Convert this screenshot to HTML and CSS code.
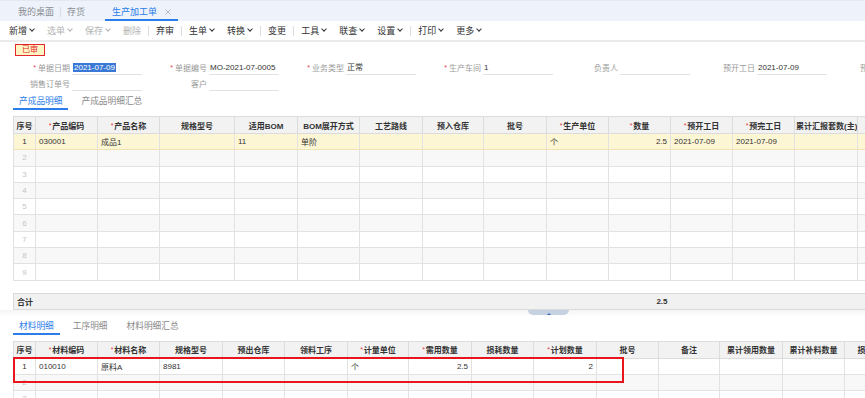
FILE: index.html
```html
<!DOCTYPE html>
<html lang="zh-CN">
<head>
    <meta charset="UTF-8">
    <meta name="viewport" content="width=device-width, initial-scale=1.0">
    <title>生产加工单</title>
    <link rel="stylesheet" href="styles.css">
</head>
<body>
    <div class="tabbar">
        <span class="tab">我的桌面</span>
        <span class="tab-sep"></span>
        <span class="tab">存货</span>
        <span class="tab active">生产加工单
            <svg class="tab-close" width="6" height="6" viewBox="0 0 6 6"><path d="M0.5 0.5L5.5 5.5M5.5 0.5L0.5 5.5" stroke="#b5b9c0" stroke-width="1"/></svg>
        </span>
    </div>

    <div class="toolbar">
        <span class="tool drop">新增</span>
        <span class="tool drop off">选单</span>
        <span class="tool drop off">保存</span>
        <span class="tool off">删除</span>
        <span class="tool-sep"></span>
        <span class="tool">弃审</span>
        <span class="tool-sep"></span>
        <span class="tool drop">生单</span>
        <span class="tool drop">转换</span>
        <span class="tool-sep"></span>
        <span class="tool">变更</span>
        <span class="tool-sep"></span>
        <span class="tool drop">工具</span>
        <span class="tool drop">联查</span>
        <span class="tool drop">设置</span>
        <span class="tool-sep"></span>
        <span class="tool drop">打印</span>
        <span class="tool drop">更多</span>
    </div>

    <div class="content">
        <div class="status">已审</div>

        <div class="form">
            <div class="form-row">
                <div class="field"><label class="req">单据日期</label><span class="val"><span class="sel">2021-07-09</span></span></div>
                <div class="field"><label class="req">单据编号</label><span class="val">MO-2021-07-0005</span></div>
                <div class="field"><label class="req">业务类型</label><span class="val">正常</span></div>
                <div class="field"><label class="req">生产车间</label><span class="val">1</span></div>
                <div class="field"><label>负责人</label><span class="val"></span></div>
                <div class="field"><label>预开工日</label><span class="val">2021-07-09</span></div>
                <div class="field"><label>预完工日</label><span class="val">2021-07-09</span></div>
            </div>
            <div class="form-row">
                <div class="field"><label>销售订单号</label><span class="val"></span></div>
                <div class="field"><label>客户</label><span class="val"></span></div>
            </div>
        </div>

        <div class="subtabs">
            <span class="subtab active">产成品明细</span>
            <span class="subtab">产成品明细汇总</span>
        </div>

        <div class="grid-wrap">
            <table class="grid">
                <colgroup>
                    <col style="width:22px"><col style="width:62px"><col style="width:62px"><col style="width:75px">
                    <col style="width:63px"><col style="width:62px"><col style="width:63px"><col style="width:61px">
                    <col style="width:63px"><col style="width:62px"><col style="width:62px"><col style="width:62px">
                    <col style="width:62px"><col style="width:63px"><col style="width:80px">
                </colgroup>
                <thead>
                    <tr>
                        <th>序号</th><th><i>*</i>产品编码</th><th><i>*</i>产品名称</th><th>规格型号</th>
                        <th>适用BOM</th><th>BOM展开方式</th><th>工艺路线</th><th>预入仓库</th>
                        <th>批号</th><th><i>*</i>生产单位</th><th><i>*</i>数量</th><th><i>*</i>预开工日</th>
                        <th><i>*</i>预完工日</th><th>累计汇报套数(主)</th><th></th>
                    </tr>
                </thead>
                <tbody>
                    <tr class="hl">
                        <td class="no">1</td><td>030001</td><td>成品1</td><td></td>
                        <td>11</td><td>单阶</td><td></td><td></td>
                        <td></td><td>个</td><td class="num">2.5</td><td>2021-07-09</td>
                        <td>2021-07-09</td><td></td><td></td>
                    </tr>
                    <tr><td class="no">2</td><td></td><td></td><td></td><td></td><td></td><td></td><td></td><td></td><td></td><td></td><td></td><td></td><td></td><td></td></tr>
                    <tr><td class="no">3</td><td></td><td></td><td></td><td></td><td></td><td></td><td></td><td></td><td></td><td></td><td></td><td></td><td></td><td></td></tr>
                    <tr><td class="no">4</td><td></td><td></td><td></td><td></td><td></td><td></td><td></td><td></td><td></td><td></td><td></td><td></td><td></td><td></td></tr>
                    <tr><td class="no">5</td><td></td><td></td><td></td><td></td><td></td><td></td><td></td><td></td><td></td><td></td><td></td><td></td><td></td><td></td></tr>
                    <tr><td class="no">6</td><td></td><td></td><td></td><td></td><td></td><td></td><td></td><td></td><td></td><td></td><td></td><td></td><td></td><td></td></tr>
                    <tr><td class="no">7</td><td></td><td></td><td></td><td></td><td></td><td></td><td></td><td></td><td></td><td></td><td></td><td></td><td></td><td></td></tr>
                    <tr><td class="no">8</td><td></td><td></td><td></td><td></td><td></td><td></td><td></td><td></td><td></td><td></td><td></td><td></td><td></td><td></td></tr>
                    <tr><td class="no">9</td><td></td><td></td><td></td><td></td><td></td><td></td><td></td><td></td><td></td><td></td><td></td><td></td><td></td><td></td></tr>
                </tbody>
            </table>
        </div>

        <div class="grid-wrap sum-wrap">
            <table class="sum">
                <colgroup>
                    <col style="width:22px"><col style="width:62px"><col style="width:62px"><col style="width:75px">
                    <col style="width:63px"><col style="width:62px"><col style="width:63px"><col style="width:61px">
                    <col style="width:63px"><col style="width:62px"><col style="width:62px"><col style="width:62px">
                    <col style="width:62px"><col style="width:63px"><col style="width:80px">
                </colgroup>
                <tr>
                    <td colspan="10">合计</td><td class="num">2.5</td><td colspan="4"></td>
                </tr>
            </table>
        </div>

        <div class="splitter"><span class="handle"></span></div>

        <div class="subtabs lower-tabs">
            <span class="subtab active">材料明细</span>
            <span class="subtab">工序明细</span>
            <span class="subtab">材料明细汇总</span>
        </div>

        <div class="grid-wrap lower">
            <table class="grid narrow">
                <colgroup>
                    <col style="width:22px"><col style="width:62px"><col style="width:62px"><col style="width:63px">
                    <col style="width:62px"><col style="width:63px"><col style="width:61px"><col style="width:63px">
                    <col style="width:62px"><col style="width:63px"><col style="width:62px"><col style="width:61px">
                    <col style="width:63px"><col style="width:62px"><col style="width:50px">
                </colgroup>
                <thead>
                    <tr>
                        <th>序号</th><th><i>*</i>材料编码</th><th><i>*</i>材料名称</th><th>规格型号</th>
                        <th>预出仓库</th><th>领料工序</th><th><i>*</i>计量单位</th><th><i>*</i>需用数量</th>
                        <th>损耗数量</th><th><i>*</i>计划数量</th><th>批号</th><th>备注</th>
                        <th>累计领用数量</th><th>累计补料数量</th><th>损耗率</th>
                    </tr>
                </thead>
                <tbody>
                    <tr class="plain">
                        <td class="no">1</td><td>010010</td><td>原料A</td><td>8981</td>
                        <td></td><td></td><td>个</td><td class="num">2.5</td>
                        <td></td><td class="num">2</td><td></td><td></td>
                        <td></td><td></td><td></td>
                    </tr>
                    <tr><td class="no">2</td><td></td><td></td><td></td><td></td><td></td><td></td><td></td><td></td><td></td><td></td><td></td><td></td><td></td><td></td></tr>
                    <tr class="plain"><td class="no">3</td><td></td><td></td><td></td><td></td><td></td><td></td><td></td><td></td><td></td><td></td><td></td><td></td><td></td><td></td></tr>
                </tbody>
            </table>
            <div class="mark"></div>
        </div>
    </div>
</body>
</html>
```

FILE: styles.css
```css
body {
    margin: 0;
    font-family: "Liberation Sans", "Noto Sans CJK SC", sans-serif;
    font-size: 8px;
    color: #333;
    background-color: #fff;
    overflow: hidden;
}

/* top page tabs */
.tabbar {
    display: flex;
    align-items: flex-end;
    height: 21px;
    padding-left: 12px;
    box-sizing: border-box;
    background-color: #eef3fb;
    border-top: 1px solid #e4e9f1;
}

.tab {
    display: flex;
    align-items: center;
    height: 14px;
    padding: 0 6px;
    font-size: 9px;
    color: #8a8d93;
    border-bottom: 2px solid transparent;
    margin-bottom: 1px;
}

.tab-sep {
    width: 1px;
    height: 10px;
    margin-bottom: 4px;
    background-color: #d9dee6;
}

.tab.active {
    margin-left: 14px;
    padding: 0 7px;
    color: #2b7de9;
    border-bottom-color: #2b7de9;
    margin-bottom: 0;
    height: 15px;
}

.tab-close {
    margin-left: 8px;
}

/* action toolbar */
.toolbar {
    display: flex;
    align-items: center;
    height: 19px;
    padding-left: 9px;
    font-size: 9px;
    border-bottom: 2px solid #ebebeb;
}

.tool {
    display: flex;
    align-items: center;
    margin-right: 12px;
    color: #333;
}

.tool.off {
    color: #b3b3b3;
}

.tool.drop::after {
    content: '';
    width: 3px;
    height: 3px;
    margin: -3px 1.5px 0 2.5px;
    border-right: 1px solid currentColor;
    border-bottom: 1px solid currentColor;
    transform: rotate(45deg);
}

.tool-sep {
    width: 1px;
    height: 10px;
    margin: 0 7px 0 -5px;
    background-color: #dcdcdc;
}

/* header form */
.content {
    padding-top: 2px;
}

.status {
    width: 30px;
    height: 12px;
    box-sizing: border-box;
    margin-left: 15px;
    border: 1.5px solid #e2282c;
    background-color: #fff4c4;
    color: #e2282c;
    font-size: 8px;
    line-height: 9px;
    text-align: center;
}

.form {
    margin-top: 5px;
    padding-left: 8px;
    overflow: hidden;
}

.form-row {
    display: grid;
    grid-template-columns: repeat(7, 137px);
    margin-bottom: 2px;
}

.field {
    display: flex;
    align-items: flex-end;
    height: 14px;
}

.field label {
    width: 64px;
    padding-right: 2px;
    box-sizing: border-box;
    text-align: right;
    color: #9a9a9a;
    line-height: 13px;
    white-space: nowrap;
}

.req::before {
    content: '*';
    color: #e5393c;
    font-size: 7px;
    margin-right: 2px;
    position: relative;
    top: -1px;
}

.field .val {
    width: 70px;
    height: 14px;
    box-sizing: border-box;
    padding-left: 1px;
    line-height: 13px;
    border-bottom: 1px solid #e2e2e2;
    color: #333;
    white-space: nowrap;
}

.sel {
    background-color: #3a78d6;
    color: #fff;
    padding: 0 1px;
}

/* detail tabs */
.subtabs {
    display: flex;
    gap: 7px;
    margin-top: 1px;
    padding-left: 13px;
}

.subtab {
    height: 14px;
    line-height: 14px;
    padding: 0 6px;
    font-size: 8.7px;
    color: #8a8a8a;
    border-bottom: 2px solid transparent;
}

.subtab.active {
    color: #2b7de9;
    border-bottom-color: #2b7de9;
}

.lower-tabs {
    margin-top: 3px;
}

/* grids */
.grid-wrap {
    margin-top: 6px;
    margin-left: 13px;
    overflow: hidden;
}

.grid, .sum {
    border-collapse: collapse;
    table-layout: fixed;
    width: 924px;
}

.grid.narrow {
    width: 881px;
}

.grid th {
    height: 16px;
    padding: 0 1px;
    background-color: #f2f2f2;
    border: 1px solid #dcdcdc;
    font-weight: bold;
    font-size: 8px;
    color: #333;
    text-align: center;
    white-space: nowrap;
    overflow: hidden;
}

.grid th i {
    font-style: normal;
    font-weight: normal;
    color: #e5393c;
    font-size: 7px;
    margin-right: 1px;
    position: relative;
    top: -1px;
}

.grid tbody tr {
    height: 16.3px;
}

.grid td {
    padding: 0 3px;
    border: 1px solid #e2e2e2;
    white-space: nowrap;
    overflow: hidden;
    color: #333;
}

.grid tbody tr:nth-child(even) {
    background-color: #f8f8f8;
}

.grid tr.hl {
    background-color: #fdf6d5;
}

.grid tr.hl td {
    border-bottom-color: #efe3ae;
}

.grid tr.plain {
    background-color: #fff;
}

.grid td.no {
    text-align: center;
    color: #c4c4c4;
    padding: 0;
}

.grid tr.hl td.no, .grid tr.plain:first-child td.no {
    color: #333;
}

.grid td.num {
    text-align: right;
}

.sum-wrap {
    margin-top: 12px;
}

.sum td {
    height: 15px;
    padding: 0 3px;
    background-color: #f1f1f1;
    border-top: 1px solid #dadada;
    border-bottom: 1px solid #dadada;
    font-weight: bold;
    white-space: nowrap;
}

.sum td:first-child {
    border-left: 1px solid #dadada;
}

.sum td.num {
    text-align: right;
}

.splitter {
    display: flex;
    height: 6px;
    padding-left: 528px;
    background: linear-gradient(#f5f5f5, #fdfdfd);
}

.handle {
    display: flex;
    justify-content: center;
    width: 41px;
    height: 5px;
    background-color: #c6d2e2;
    border-radius: 0 0 5px 5px;
}

.handle::after {
    content: '';
    margin-top: 1px;
    border-left: 2px solid transparent;
    border-right: 2px solid transparent;
    border-bottom: 2px solid #3b6fc4;
}

.lower {
    position: relative;
}

.mark {
    position: absolute;
    left: 0;
    top: 16px;
    width: 611px;
    height: 26px;
    box-sizing: border-box;
    border: 2px solid #e8161b;
}
```
